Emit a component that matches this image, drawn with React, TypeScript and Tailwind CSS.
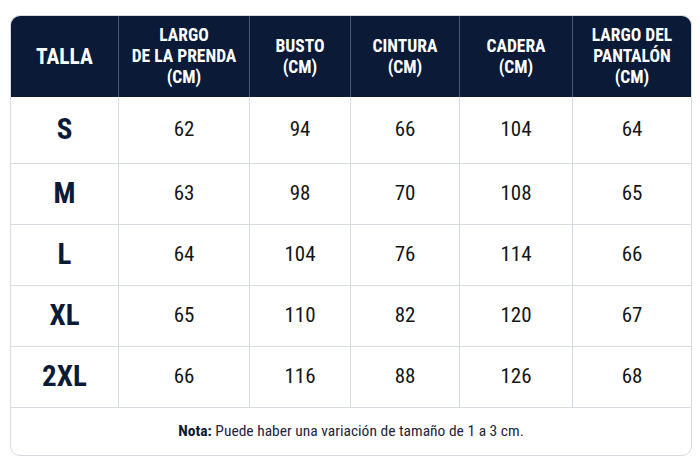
import React from "react";

const cols = "grid grid-cols-[107px_131px_101px_109px_113px_119px]";
const font = { fontFamily: '"Roboto Condensed", "Liberation Sans Narrow", "DejaVu Sans Condensed", "Roboto", sans-serif' };

const headers: string[][] = [
  ["TALLA"],
  ["LARGO", "DE LA PRENDA", "(CM)"],
  ["BUSTO", "(CM)"],
  ["CINTURA", "(CM)"],
  ["CADERA", "(CM)"],
  ["LARGO DEL", "PANTALÓN", "(CM)"],
];

const rows: [string, number[]][] = [
  ["S", [62, 94, 66, 104, 64]],
  ["M", [63, 98, 70, 108, 65]],
  ["L", [64, 104, 76, 114, 66]],
  ["XL", [65, 110, 82, 120, 67]],
  ["2XL", [66, 116, 88, 126, 68]],
];

export default function App() {
  return (
    <div className="w-[700px] h-[467px] bg-white pl-[10px] pt-[15px]" style={font}>
      <div className="w-[682px] rounded-[10px] border border-[#d7dadf] overflow-hidden">
        <div className={`${cols} h-[81px] bg-[#0b1a36] text-white font-bold`}>
          {headers.map((h, i) => (
            <div
              key={i}
              className={`flex flex-col items-center justify-center text-center ${i > 0 ? "border-l border-[#4a5570]" : ""}`}
            >
              {h.map((l, j) => (
                <div key={j} className={i === 0 ? "text-[21.5px] leading-[26px]" : "text-[17.5px] leading-[21px]"}>
                  {l}
                </div>
              ))}
            </div>
          ))}
        </div>
        {rows.map(([size, vals], r) => (
          <div key={size} className={`${cols} ${r === 0 ? "h-[66px]" : "h-[61px] border-t border-[#d7dadf]"}`}>
            <div className="flex items-center justify-center text-[29px] font-bold text-[#0b1a36]">{size}</div>
            {vals.map((v, i) => (
              <div key={i} className="flex items-center justify-center border-l border-[#d7dadf] text-[21px] text-[#151515]">
                {v}
              </div>
            ))}
          </div>
        ))}
        <div className="h-[48px] border-t border-[#d7dadf] flex items-center justify-center text-[15.5px] text-[#1d2638]">
          <span className="font-bold text-[#0b1a36]">Nota:</span>
          <span>&nbsp;Puede haber una variación de tamaño de 1 a 3 cm.</span>
        </div>
      </div>
    </div>
  );
}
